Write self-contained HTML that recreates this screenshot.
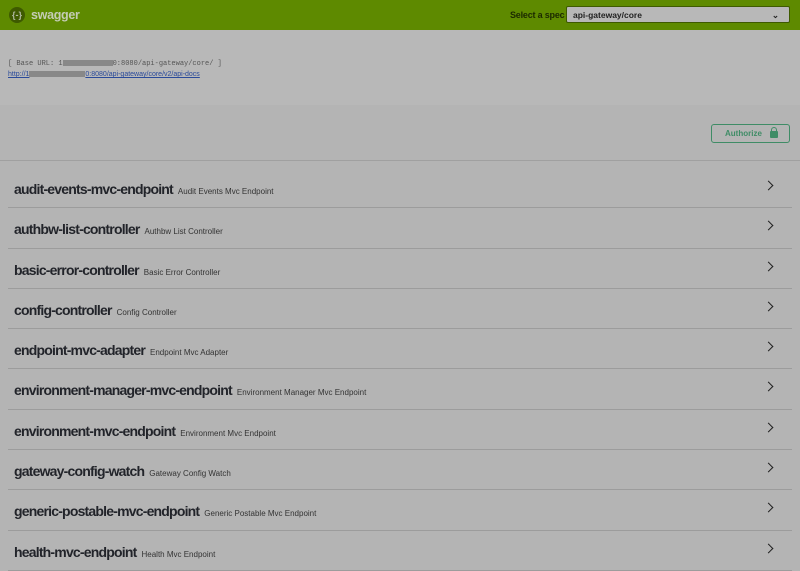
<!DOCTYPE html>
<html><head><style>
body{margin:0;width:800px;height:570px;overflow:hidden;background:#b4b4b4;font-family:"Liberation Sans",sans-serif;}
.top{height:30px;background:#5e8a00;position:relative}
.logo{position:absolute;left:9px;top:7px;width:16px;height:16px;border-radius:50%;background:#3e5a00;color:#b0b8a0;font-size:9px;line-height:16px;text-align:center;font-weight:bold}
.brand{position:absolute;left:31px;top:8px;color:#c4ccb4;font-weight:bold;font-size:12.5px;letter-spacing:-0.3px}
.sel-l{position:absolute;left:510px;top:10px;font-size:9px;font-weight:bold;color:#1c2a00;letter-spacing:-0.2px}
.sel{position:absolute;left:566px;top:6px;width:224px;height:17px;background:#b8b8b8;border:1px solid #3e5a00;border-radius:2px;font-size:8.5px;font-weight:bold;color:#222;line-height:17px;padding-left:6px;box-sizing:border-box}
.sel span{position:absolute;right:10px;top:0}
.info{height:75px;background:#b8b8b8;position:relative}
.base{position:absolute;left:8px;top:30px;font-family:"Liberation Mono",monospace;font-size:7px;color:#555}
.link{position:absolute;left:8px;top:41px;font-size:7px;color:#2a4a9a;text-decoration:underline}
.blur{display:inline-block;width:50px;height:6px;background:#888;vertical-align:middle}
.auth-area{height:55px;border-bottom:1px solid #a0a0a0;position:relative}
.auth{position:absolute;left:711px;top:19px;width:77px;height:17px;border:1.5px solid #3f8c66;border-radius:3px;color:#3f8c66;font-size:8px;font-weight:bold;line-height:17px}
.auth b{position:absolute;left:13px}
.lock{position:absolute;left:58px;top:6px;width:8px;height:7px;background:#3f8c66;border-radius:1px}
.lock:before{content:"";position:absolute;left:1px;top:-4px;width:4px;height:4px;border:1.5px solid #3f8c66;border-bottom:none;border-radius:3px 3px 0 0}
.row{margin:0 8px;height:39.3px;border-bottom:1px solid #9c9c9c;position:relative}
.t{position:absolute;left:6px;top:13px;font-size:14px;font-weight:bold;color:#22242a;white-space:nowrap;letter-spacing:-0.8px}
.t small{font-size:8px;font-weight:normal;color:#333;margin-left:5px;letter-spacing:0}
.ch{position:absolute;right:20px;top:14px;width:6px;height:6px;border-right:1.5px solid #222;border-top:1.5px solid #222;transform:rotate(45deg)}
.first{margin-top:7px}
</style></head><body>
<div class="top"><div class="logo">{-}</div><div class="brand">swagger</div>
<div class="sel-l">Select a spec</div><div class="sel">api-gateway/core<span>⌄</span></div></div>
<div class="info">
<div class="base">[ Base URL: 1<span class="blur"></span>0:8080/api-gateway/core/ ]</div>
<div class="link">http://1<span class="blur" style="width:56px"></span>0:8080/api-gateway/core/v2/api-docs</div>
</div>
<div class="auth-area"><div class="auth"><b>Authorize</b><div class="lock"></div></div></div>
<div class="row first"><div class="t">audit-events-mvc-endpoint<small>Audit Events Mvc Endpoint</small></div><div class="ch"></div></div>
<div class="row"><div class="t">authbw-list-controller<small>Authbw List Controller</small></div><div class="ch"></div></div>
<div class="row"><div class="t">basic-error-controller<small>Basic Error Controller</small></div><div class="ch"></div></div>
<div class="row"><div class="t">config-controller<small>Config Controller</small></div><div class="ch"></div></div>
<div class="row"><div class="t">endpoint-mvc-adapter<small>Endpoint Mvc Adapter</small></div><div class="ch"></div></div>
<div class="row"><div class="t">environment-manager-mvc-endpoint<small>Environment Manager Mvc Endpoint</small></div><div class="ch"></div></div>
<div class="row"><div class="t">environment-mvc-endpoint<small>Environment Mvc Endpoint</small></div><div class="ch"></div></div>
<div class="row"><div class="t">gateway-config-watch<small>Gateway Config Watch</small></div><div class="ch"></div></div>
<div class="row"><div class="t">generic-postable-mvc-endpoint<small>Generic Postable Mvc Endpoint</small></div><div class="ch"></div></div>
<div class="row"><div class="t">health-mvc-endpoint<small>Health Mvc Endpoint</small></div><div class="ch"></div></div>
</body></html>
